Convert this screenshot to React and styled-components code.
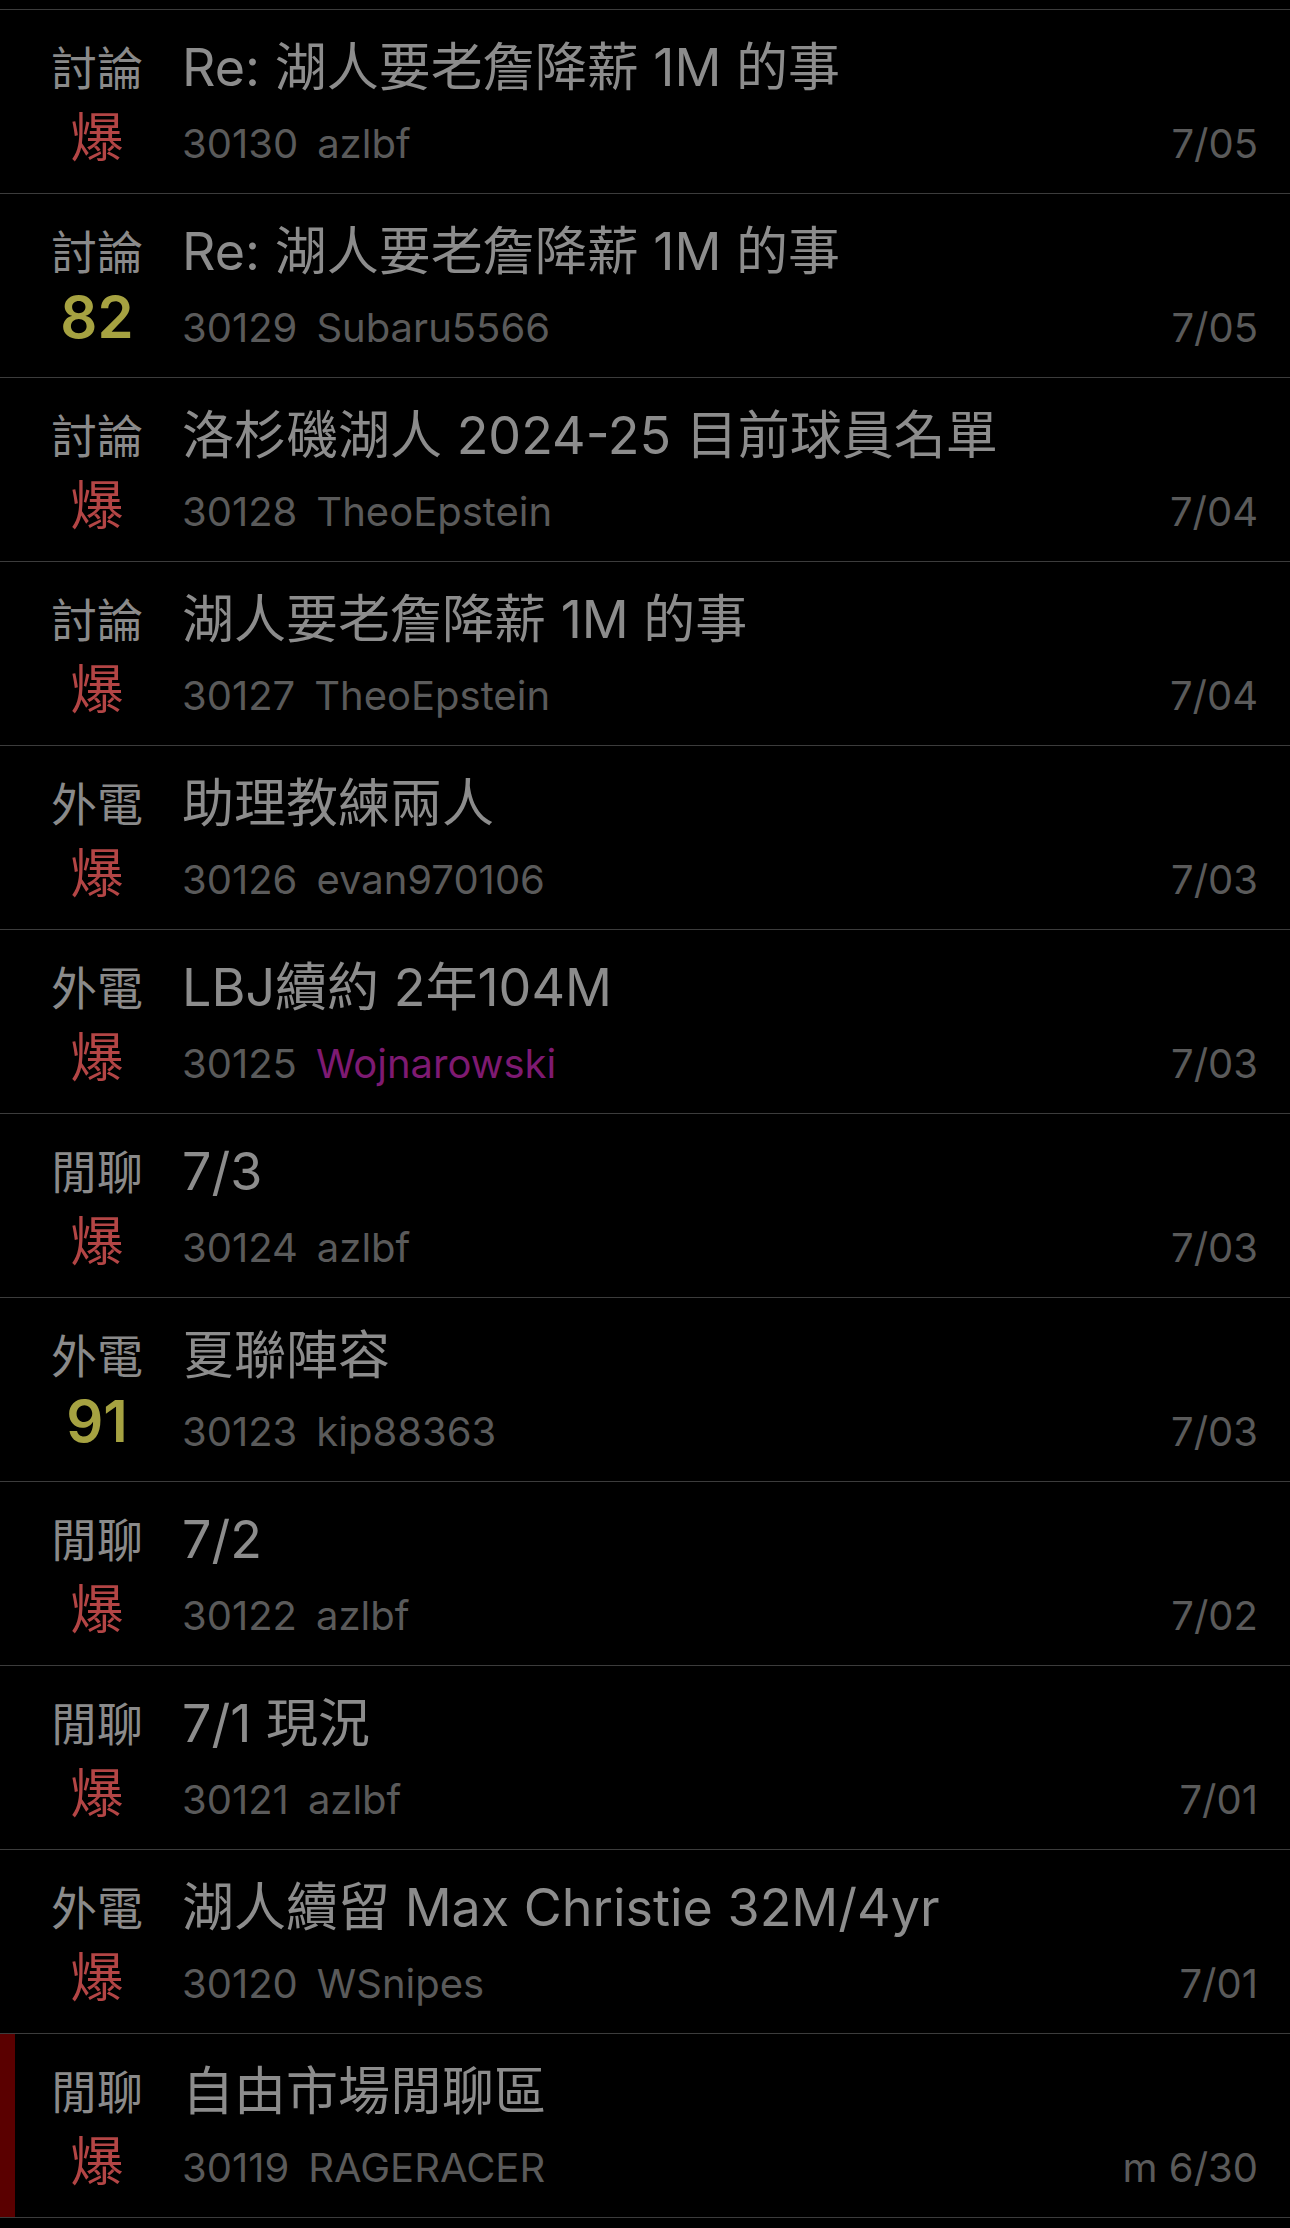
import styled, { createGlobalStyle } from 'styled-components';

const GlobalStyle = createGlobalStyle`
  html, body {
    margin: 0;
    padding: 0;
    background: #000;
  }
  body {
    font-family: "Inter", "Noto Sans CJK TC", sans-serif;
  }
`;

const posts = [
  { cat: '討論', push: '爆', title: 'Re: 湖人要老詹降薪 1M 的事', id: 30130, author: 'azlbf', date: '7/05' },
  { cat: '討論', push: '82', title: 'Re: 湖人要老詹降薪 1M 的事', id: 30129, author: 'Subaru5566', date: '7/05' },
  { cat: '討論', push: '爆', title: '洛杉磯湖人 2024-25 目前球員名單', id: 30128, author: 'TheoEpstein', date: '7/04' },
  { cat: '討論', push: '爆', title: '湖人要老詹降薪 1M 的事', id: 30127, author: 'TheoEpstein', date: '7/04' },
  { cat: '外電', push: '爆', title: '助理教練兩人', id: 30126, author: 'evan970106', date: '7/03' },
  { cat: '外電', push: '爆', title: 'LBJ續約 2年104M', id: 30125, author: 'Wojnarowski', date: '7/03', special: true },
  { cat: '閒聊', push: '爆', title: '7/3', id: 30124, author: 'azlbf', date: '7/03' },
  { cat: '外電', push: '91', title: '夏聯陣容', id: 30123, author: 'kip88363', date: '7/03' },
  { cat: '閒聊', push: '爆', title: '7/2', id: 30122, author: 'azlbf', date: '7/02' },
  { cat: '閒聊', push: '爆', title: '7/1 現況', id: 30121, author: 'azlbf', date: '7/01' },
  { cat: '外電', push: '爆', title: '湖人續留 Max Christie 32M/4yr', id: 30120, author: 'WSnipes', date: '7/01' },
  { cat: '閒聊', push: '爆', title: '自由市場閒聊區', id: 30119, author: 'RAGERACER', date: 'm 6/30', marked: true },
];

const Screen = styled.div`
  background: #000;
  min-height: 2228px;
  padding-top: 9px;
`;

const List = styled.ul`
  list-style: none;
  margin: 0;
  padding: 0;
  border-top: 1px solid #3c3c3c;
`;

const Row = styled.li`
  position: relative;
  border-bottom: 1px solid #3c3c3c;
  display: grid;
  grid-template-columns: 114px 1fr auto;
  grid-template-rows: 64px 64px;
  column-gap: 28px;
  align-content: start;
  padding: 26px 34px 0 40px;
  box-sizing: border-box;
  height: 184px;

  &::before {
    content: '';
    display: ${p => (p.$marked ? 'block' : 'none')};
    position: absolute;
    left: 0;
    top: 0;
    bottom: 0;
    width: 15px;
    background: #5a0000;
  }
`;

const Category = styled.div`
  grid-column: 1;
  grid-row: 1;
  text-align: center;
  font-size: 46px;
  line-height: 64px;
  color: #8a8a8a;
  white-space: nowrap;
`;

const Push = styled.div`
  grid-column: 1;
  grid-row: 2;
  text-align: center;
  font-size: ${p => (p.$hot ? '53px' : '58px')};
  font-weight: ${p => (p.$hot ? 400 : 600)};
  line-height: 64px;
  color: ${p => (p.$hot ? '#b34545' : '#a6a241')};
  margin-top: ${p => (p.$hot ? '6px' : '1px')};
`;

const Title = styled.div`
  grid-column: 2 / 4;
  grid-row: 1;
  font-size: 52px;
  line-height: 64px;
  color: #8c8c8c;
  white-space: nowrap;
  overflow: hidden;
`;

const Meta = styled.div`
  grid-column: 2;
  grid-row: 2;
  display: flex;
  gap: 19px;
  font-size: 40px;
  line-height: 64px;
  color: #5a5a5a;
  margin-top: 12px;
`;

const Author = styled.span`
  color: ${p => (p.$special ? '#7e1a72' : '#5a5a5a')};
`;

const DateText = styled.div`
  grid-column: 3;
  grid-row: 2;
  font-size: 40px;
  line-height: 64px;
  color: #5a5a5a;
  text-align: right;
  margin-top: 12px;
  margin-right: -2px;
`;

export default function App() {
  return (
    <Screen>
      <GlobalStyle />
      <List>
        {posts.map(p => (
          <Row key={p.id} $marked={p.marked}>
            <Category>{p.cat}</Category>
            <Push $hot={p.push === '爆'}>{p.push}</Push>
            <Title>{p.title}</Title>
            <Meta>
              <span>{p.id}</span>
              <Author $special={p.special}>{p.author}</Author>
            </Meta>
            <DateText>{p.date}</DateText>
          </Row>
        ))}
      </List>
    </Screen>
  );
}
